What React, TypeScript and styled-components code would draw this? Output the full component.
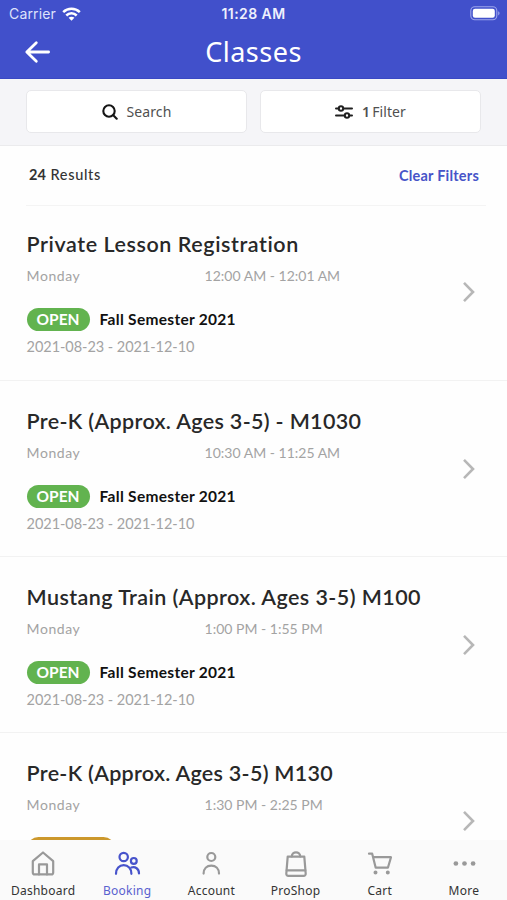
import React from 'react';
import styled, { createGlobalStyle } from 'styled-components';

const lato = '"Lato", "Noto Sans", sans-serif';
const noto = '"Noto Sans", "Open Sans", sans-serif';
const blue = '#4150cb';

const GlobalStyle = createGlobalStyle`
  * { box-sizing: border-box; }
  body { margin: 0; background: #fff; font-family: ${lato}; }
`;

const Screen = styled.div`
  width: 507px;
  height: 900px;
  display: flex;
  flex-direction: column;
  overflow: hidden;
  background: #fefefe;
`;

const Header = styled.header`
  flex: none;
  height: 79px;
  background: ${blue};
  color: #fff;
  border-bottom: 1px solid #3948c4;
`;

const StatusBar = styled.div`
  height: 27px;
  display: grid;
  grid-template-columns: 1fr auto 1fr;
  align-items: center;
  padding: 0 7px 0 9px;
  font-family: "Inter", "Roboto", sans-serif;
  font-size: 14px;
  line-height: 27px;
`;

const Carrier = styled.div`
  display: flex;
  align-items: center;
  gap: 6px;
  color: #dfe2fb;
  letter-spacing: 0.15px;
`;

const Clock = styled.div`
  font-weight: 600;
  font-size: 14px;
  letter-spacing: 0.45px;
  margin-right: 2px;
  color: #eff0fd;
`;

const Battery = styled.div`
  justify-self: end;
  display: flex;
`;

const TitleBar = styled.div`
  height: 50px;
  display: grid;
  grid-template-columns: 60px 1fr 60px;
  align-items: center;
`;

const BackButton = styled.button`
  border: 0;
  padding: 0 0 0 24px;
  background: none;
  display: flex;
`;

const PageTitle = styled.h1`
  margin: 0;
  text-align: center;
  font: 400 27px/50px ${noto};
  letter-spacing: 0.5px;
`;

const Toolbar = styled.div`
  flex: none;
  height: 67px;
  padding: 11px 26px 0;
  display: grid;
  grid-template-columns: 1fr 1fr;
  gap: 13px;
  background: #f5f5f8;
  border-bottom: 1px solid #ebebed;
`;

const ToolButton = styled.button`
  height: 43px;
  display: flex;
  align-items: center;
  justify-content: center;
  padding: 0;
  background: #fff;
  border: 1px solid #e8e8eb;
  border-radius: 5px;
  color: #505050;
  font: 400 14px/20px ${noto};
  letter-spacing: 0.1px;

  svg { margin-right: 9px; }
  b { font-weight: 600; margin-right: 2px; }
`;

const Summary = styled.div`
  flex: none;
  height: 60px;
  margin: 0 21px 0 26px;
  padding: 0 7px 0 3px;
  display: flex;
  justify-content: space-between;
  border-bottom: 1px solid #f4f4f4;
`;

const Count = styled.div`
  font-size: 14.5px;
  font-weight: 500;
  line-height: 57px;
  letter-spacing: 0.7px;
  color: #333;

  b { letter-spacing: 0.1px; }
`;

const ClearLink = styled.a`
  font-weight: 700;
  font-size: 14.5px;
  line-height: 59px;
  letter-spacing: 0.22px;
  color: #4754c8;
`;

const List = styled.main`
  flex: 1;
  min-height: 0;
  overflow: hidden;
`;

const Row = styled.article`
  height: 176.4px;
  padding: 26px 31px 0 26.6px;
  display: grid;
  grid-template-columns: 1fr 14px;
  border-bottom: 1px solid #f2f2f2;

  &:first-child {
    height: 174.6px;
    padding-top: 24px;
  }
`;

const Details = styled.div`
  min-width: 0;
`;

const ClassName = styled.h2<{ $tracking: number }>`
  margin: 0;
  font-weight: 600;
  font-size: 21.5px;
  line-height: 28px;
  letter-spacing: ${(p) => p.$tracking}px;
  white-space: nowrap;
  color: #282828;
`;

const Schedule = styled.div`
  display: grid;
  grid-template-columns: 178px 1fr;
  margin-top: 8px;
  font-size: 14px;
  line-height: 20px;
  color: #a3a3a3;
`;

const Day = styled.span`
  letter-spacing: 0.55px;
`;

const Session = styled.div`
  display: flex;
  align-items: center;
  gap: 10px;
  height: 23px;
  margin-top: 22px;
`;

const Badge = styled.span<{ $tone: 'open' | 'waitlist' }>`
  height: 23px;
  width: ${(p) => (p.$tone === 'open' ? 63 : 88)}px;
  border-radius: 12px;
  background: ${(p) => (p.$tone === 'open' ? '#62b34f' : '#cc982c')};
  color: #fff;
  font-weight: 700;
  font-size: 15.5px;
  line-height: 23px;
  text-align: center;
`;

const Semester = styled.span`
  font-weight: 700;
  font-size: 15.5px;
  line-height: 23px;
  letter-spacing: 0.29px;
  color: #111;
`;

const Dates = styled.div`
  margin-top: 6px;
  font-size: 14.5px;
  line-height: 20px;
  letter-spacing: -0.05px;
  color: #a3a3a3;
`;

const Chevron = styled.div`
  padding-top: 51px;
`;

const TabBar = styled.nav`
  flex: none;
  height: 60px;
  display: grid;
  grid-template-columns: repeat(6, 1fr);
  padding: 0 1px;
  background: #fafafa;
`;

const Tab = styled.a<{ $active?: boolean }>`
  display: flex;
  flex-direction: column;
  align-items: center;
  padding-top: 8px;
  color: ${(p) => (p.$active ? '#4753cb' : '#999')};

  span {
    margin-top: 2px;
    font: 400 12px/18px ${noto};
    letter-spacing: 0.25px;
    color: ${(p) => (p.$active ? '#5961cf' : '#333')};
  }
`;

interface ClassInfo {
  name: string;
  time: string;
  tracking: number;
  status: 'open' | 'waitlist';
}

const classes: ClassInfo[] = [
  { name: 'Private Lesson Registration', time: '12:00 AM - 12:01 AM', tracking: 0.57, status: 'open' },
  { name: 'Pre-K (Approx. Ages 3-5) - M1030', time: '10:30 AM - 11:25 AM', tracking: 0.33, status: 'open' },
  { name: 'Mustang Train (Approx. Ages 3-5) M100', time: '1:00 PM - 1:55 PM', tracking: 0.43, status: 'open' },
  { name: 'Pre-K (Approx. Ages 3-5) M130', time: '1:30 PM - 2:25 PM', tracking: 0.28, status: 'waitlist' },
];

const TabIcon = ({ children }: { children: React.ReactNode }) => (
  <svg width="32" height="32" viewBox="0 0 32 32" fill="none" stroke="currentColor" strokeWidth="2.200" strokeLinecap="round" strokeLinejoin="round">
    {children}
  </svg>
);

const tabs = [
  {
    label: 'Dashboard',
    icon: (
      <>
        <path d="M5.800 13.200 16 4.500l10.200 8.700v11.200a2 2 0 0 1-2 2H7.800a2 2 0 0 1-2-2z" />
        <path d="M12 26.400V16.400h8v10" />
      </>
    ),
  },
  {
    label: 'Booking',
    active: true,
    icon: (
      <>
        <circle cx="12.700" cy="9" r="4.200" />
        <circle cx="22.800" cy="12.900" r="2.900" />
        <path d="M5 25.800c0-5.300 3.300-8.600 7.700-8.600s7.700 3.300 7.700 8.600" />
        <path d="M20.300 19.500c4-1.300 7.700 1.300 7.700 6" />
      </>
    ),
  },
  {
    label: 'Account',
    icon: (
      <>
        <circle cx="16.300" cy="9" r="4" />
        <path d="M8.600 25.600c0-5 3.200-8 7.700-8s7.700 3 7.700 8" />
      </>
    ),
  },
  {
    label: 'ProShop',
    icon: (
      <>
        <path d="M7.700 8.700h16.600l1.400 16.900a2 2 0 0 1-2 2.200H8.300a2 2 0 0 1-2-2.200z" />
        <path d="M11.800 8.500c0-5.600 8.400-5.600 8.400 0M6.700 22.300h18.600" />
      </>
    ),
  },
  {
    label: 'Cart',
    icon: (
      <>
        <path d="M5 5.700h3.200l3.500 14h12.200L27 9.200H9.200" />
        <circle cx="11.500" cy="24.600" r="0.900" fill="currentColor" />
        <circle cx="23.800" cy="24.600" r="0.900" fill="currentColor" />
      </>
    ),
  },
  {
    label: 'More',
    icon: (
      <g fill="currentColor" stroke="none">
        <circle cx="7.900" cy="15.500" r="2.350" />
        <circle cx="16.500" cy="15.500" r="2.350" />
        <circle cx="25.100" cy="15.500" r="2.350" />
      </g>
    ),
  },
];

const ClassRow = ({ info }: { info: ClassInfo }) => (
  <Row>
    <Details>
      <ClassName $tracking={info.tracking}>{info.name}</ClassName>
      <Schedule>
        <Day>Monday</Day>
        <span>{info.time}</span>
      </Schedule>
      <Session>
        <Badge $tone={info.status}>{info.status === 'open' ? 'OPEN' : ''}</Badge>
        {info.status === 'open' && <Semester>Fall Semester 2021</Semester>}
      </Session>
      {info.status === 'open' && <Dates>2021-08-23 - 2021-12-10</Dates>}
    </Details>
    <Chevron>
      <svg width="14" height="22" viewBox="0 0 14 22" fill="none" stroke="#b7b7b7" strokeWidth="2.600">
        <path d="M2 1.800 11 11l-9 9.200" />
      </svg>
    </Chevron>
  </Row>
);

export default function App() {
  return (
    <Screen>
      <GlobalStyle />
      <Header>
        <StatusBar>
          <Carrier>
            Carrier
            <svg width="19" height="14" viewBox="0 0 19 14" fill="none" stroke="#fff" strokeWidth="2.500">
              <path d="M1.200 5.200c4.600-4.500 12-4.500 16.600 0M4.300 8.500c2.900-2.900 7.500-2.900 10.400 0" />
              <path d="M6.600 10.800c1.600-1.500 4.200-1.500 5.800 0L9.500 13.700z" fill="#fff" stroke="none" />
            </svg>
          </Carrier>
          <Clock>11:28 AM</Clock>
          <Battery>
            <svg width="30" height="15" viewBox="0 0 30 15">
              <rect x="0.800" y="0.800" width="26" height="13" rx="4" fill="none" stroke="#9da5ec" strokeWidth="1.100" />
              <rect x="2.800" y="2.800" width="22" height="9" rx="2.200" fill="#fff" />
              <path d="M28.200 5.300c1.800.6 1.800 3.500 0 4.100z" fill="#9da5ec" />
            </svg>
          </Battery>
        </StatusBar>
        <TitleBar>
          <BackButton aria-label="Back">
            <svg width="28" height="24" viewBox="0 0 28 24" fill="none" stroke="#fff" strokeWidth="2.800" strokeLinecap="round" strokeLinejoin="round">
              <path d="M12.300 2.700 2.800 12l9.500 9.200M3 12h21.600" />
            </svg>
          </BackButton>
          <PageTitle>Classes</PageTitle>
        </TitleBar>
      </Header>
      <Toolbar>
        <ToolButton>
          <svg width="16" height="16" viewBox="0 0 16 16" fill="none" stroke="#151515" strokeWidth="2.100" strokeLinecap="round">
            <circle cx="7" cy="7" r="5.700" />
            <path d="m11.300 11.300 3.400 3.400" />
          </svg>
          Search
        </ToolButton>
        <ToolButton>
          <svg width="18" height="14" viewBox="0 0 18 14" fill="none" stroke="#202020" strokeWidth="2" strokeLinecap="round">
            <path d="M1 3.500h2.500M8.500 3.500H17M1 10.500h8.500M14.500 10.500H17" />
            <circle cx="6" cy="3.500" r="2.200" />
            <circle cx="12" cy="10.500" r="2.200" />
          </svg>
          <b>1</b>Filter
        </ToolButton>
      </Toolbar>
      <Summary>
        <Count><b>24</b> Results</Count>
        <ClearLink>Clear Filters</ClearLink>
      </Summary>
      <List>
        {classes.map((info) => (
          <ClassRow key={info.name} info={info} />
        ))}
      </List>
      <TabBar>
        {tabs.map((tab) => (
          <Tab key={tab.label} $active={tab.active}>
            <TabIcon>{tab.icon}</TabIcon>
            <span>{tab.label}</span>
          </Tab>
        ))}
      </TabBar>
    </Screen>
  );
}
